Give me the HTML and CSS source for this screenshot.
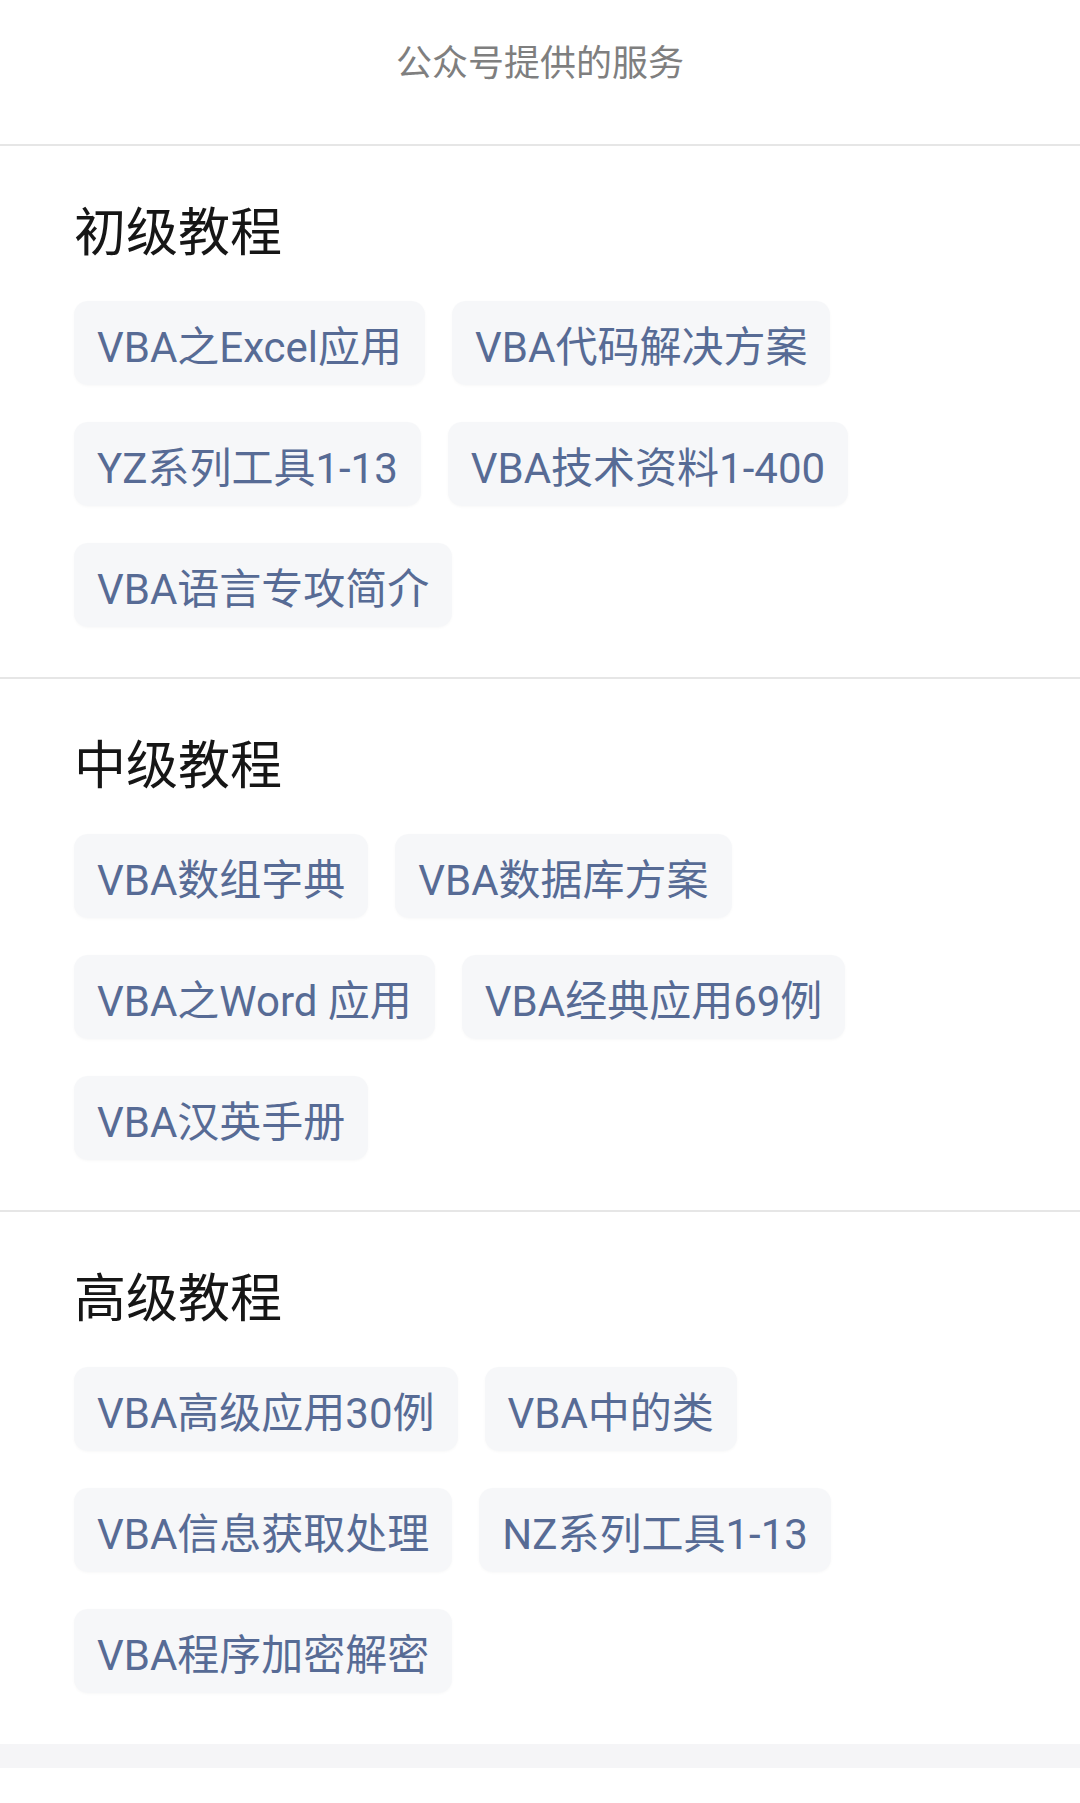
FILE: index.html
```html
<!DOCTYPE html>
<html lang="zh-CN">
<head>
<meta charset="utf-8">
<title>公众号提供的服务</title>
<link rel="stylesheet" href="styles.css">
</head>
<body>
<header class="topbar">公众号提供的服务</header>
<main>
  <section class="group">
    <h2 class="group-title">初级教程</h2>
    <div class="chips">
      <span class="chip">VBA之Excel应用</span>
      <span class="chip">VBA代码解决方案</span>
      <span class="chip">YZ系列工具1-13</span>
      <span class="chip">VBA技术资料1-400</span>
      <span class="chip">VBA语言专攻简介</span>
    </div>
  </section>
  <section class="group">
    <h2 class="group-title">中级教程</h2>
    <div class="chips">
      <span class="chip">VBA数组字典</span>
      <span class="chip">VBA数据库方案</span>
      <span class="chip">VBA之Word 应用</span>
      <span class="chip">VBA经典应用69例</span>
      <span class="chip">VBA汉英手册</span>
    </div>
  </section>
  <section class="group last">
    <h2 class="group-title">高级教程</h2>
    <div class="chips">
      <span class="chip">VBA高级应用30例</span>
      <span class="chip">VBA中的类</span>
      <span class="chip">VBA信息获取处理</span>
      <span class="chip">NZ系列工具1-13</span>
      <span class="chip">VBA程序加密解密</span>
    </div>
  </section>
  <div class="band"></div>
</main>
</body>
</html>
```
FILE: styles.css
```css
html, body {
  margin: 0;
  padding: 0;
  background: #ffffff;
}
body {
  font-family: Roboto, "Noto Sans CJK SC", "Noto Sans", sans-serif;
}
.topbar {
  height: 120px;
  padding-bottom: 24px;
  display: flex;
  align-items: center;
  justify-content: center;
  font-size: 36px;
  color: #7f7f7f;
  border-bottom: 2px solid #e6e6e6;
}
.group {
  padding: 52px 74px 50px;
  border-bottom: 2px solid #e6e6e6;
}
.group.last {
  border-bottom: none;
  padding-bottom: 51px;
}
.group-title {
  margin: 0 0 31px;
  font-size: 52px;
  line-height: 72px;
  font-weight: 400;
  color: #161616;
}
.chips {
  display: flex;
  flex-wrap: wrap;
  gap: 37px 27px;
}
.chip {
  display: inline-flex;
  align-items: center;
  height: 84px;
  padding: 0 23px;
  border-radius: 14px;
  background: #f6f7f9;
  box-shadow: 0 1px 3px rgba(0, 0, 0, 0.03);
  font-size: 42px;
  color: #576b95;
  white-space: nowrap;
}
.band {
  height: 24px;
  background: #f5f5f7;
}
```
